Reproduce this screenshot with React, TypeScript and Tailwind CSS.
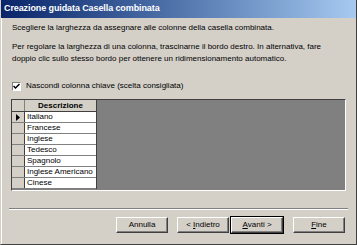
import React from "react";

const rows = ["Italiano", "Francese", "Inglese", "Tedesco", "Spagnolo", "Inglese Americano", "Cinese"];

function Btn({ children, def }: { children: React.ReactNode; def?: boolean }) {
  return (
    <div className={def ? "border border-black" : "p-px"}>
      <div className="h-[16px] w-[52px] border border-t-white border-l-white border-r-[#404040] border-b-[#404040] bg-[#d4d0c8] flex items-center justify-center shadow-[inset_-1px_-1px_0_#808080] whitespace-pre">
        {children}
      </div>
    </div>
  );
}

export default function App() {
  return (
    <div
      className="w-[357px] h-[245px] bg-[#d4d0c8] flex flex-col border-l border-l-[#d4d0c8] border-r border-r-[#404040] border-b border-b-[#404040] text-black overflow-hidden"
      style={{ fontFamily: '"Liberation Sans", Arial, sans-serif' }}
    >
      <div className="h-[18px] shrink-0 flex items-center pl-[3px] bg-gradient-to-r from-[#0a246a] to-[#a6caf0] text-white font-bold text-[9px] tracking-[-0.1px]">
        Creazione guidata Casella combinata
      </div>
      <div className="flex-1 flex flex-col shadow-[inset_1px_0_0_#ffffff]">
        <div className="px-[11px] pt-[4px] text-[8px] leading-[12px]">
          <div>Scegliere la larghezza da assegnare alle colonne della casella combinata.</div>
          <div className="mt-[7px]">Per regolare la larghezza di una colonna, trascinarne il bordo destro. In alternativa, fare</div>
          <div>doppio clic sullo stesso bordo per ottenere un ridimensionamento automatico.</div>
          <div className="mt-[15px] flex items-center gap-[5px]">
            <div className="w-[9px] h-[9px] bg-white border border-t-[#808080] border-l-[#808080] border-r-white border-b-white flex items-center justify-center">
              <svg width="7" height="7" viewBox="0 0 7 7"><path d="M0.5 3 L2.5 5 L6.5 1" stroke="black" strokeWidth="1.5" fill="none" /></svg>
            </div>
            <span>Nascondi colonna chiave (scelta consigliata)</span>
          </div>
        </div>
        <div className="mx-[10px] mt-[7px] h-[92px] border border-t-[#404040] border-l-[#404040] border-r-white border-b-white bg-[#808080] flex">
          <div className="flex flex-col bg-white border-r border-r-[#404040] self-start">
            <div className="flex h-[12px] bg-[#d4d0c8] border-b border-b-[#404040]">
              <div className="w-[13px] border-r border-r-[#808080]" />
              <div className="w-[71px] text-center font-bold text-[8px] leading-[11px]">Descrizione</div>
            </div>
            {rows.map((r, i) => (
              <div key={r} className="flex h-[11px] border-b border-b-[#808080]">
                <div className="w-[13px] bg-[#d4d0c8] border-r border-r-[#404040] flex items-center justify-center">
                  {i === 0 && (
                    <svg width="4" height="7" viewBox="0 0 4 7"><path d="M0 0 L4 3.5 L0 7 Z" fill="black" /></svg>
                  )}
                </div>
                <div className="w-[71px] pl-[2px] text-[8px] leading-[10px]">{r}</div>
              </div>
            ))}
          </div>
        </div>
        <div className="mx-[8px] mt-[17px] h-[2px] border-t border-t-[#808080] border-b border-b-white" />
        <div className="flex justify-end pr-[10px] mt-[6px] text-[8px]">
          <Btn>Annulla</Btn>
          <div className="w-[7px]" />
          <Btn>&lt; <u>I</u>ndietro</Btn>
          <Btn def><u>A</u>vanti &gt;</Btn>
          <div className="w-[8px]" />
          <Btn><u>F</u>ine</Btn>
        </div>
      </div>
    </div>
  );
}
